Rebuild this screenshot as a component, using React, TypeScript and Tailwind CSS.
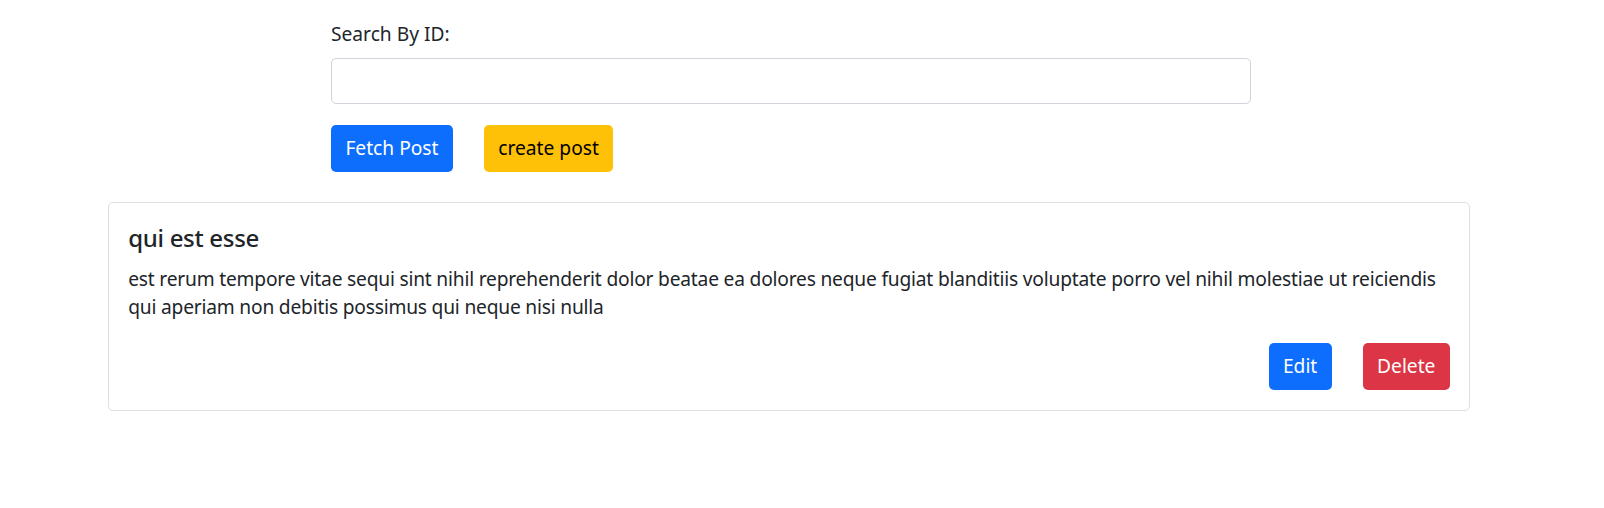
import React from 'react';

const post = {
  title: 'qui est esse',
  body: 'est rerum tempore vitae sequi sint nihil reprehenderit dolor beatae ea dolores neque fugiat blanditiis voluptate porro vel nihil molestiae ut reiciendis qui aperiam non debitis possimus qui neque nisi nulla',
};

export default function App() {
  return (
    <div
      className="min-h-[508px] bg-white text-[#212529] text-[19.2px] leading-[1.5]"
      style={{ fontFamily: '"Segoe UI", "Noto Sans", "Open Sans", sans-serif' }}
    >
      <div className="ml-[108px] w-[1362px] pt-[20px]">
        {/* Search form */}
        <div className="ml-[223px] w-[920px]">
          <label className="block mb-[9.6px]">Search By ID:</label>
          <input
            type="text"
            className="block w-full h-[46px] px-[14.4px] border border-[#ced4da] rounded-[5px] outline-none"
          />
          <div className="flex gap-[31px] mt-[21px]">
            <button className="h-[47px] px-[14.4px] rounded-[5px] bg-[#0d6efd] text-white">Fetch Post</button>
            <button className="h-[47px] px-[14.4px] rounded-[5px] bg-[#ffc107] text-black">create post</button>
          </div>
        </div>

        {/* Post card */}
        <div className="mt-[30px] border border-[#dfdfdf] rounded-[5px] px-[19.2px] pt-[21px] pb-[20px]">
          <h5 className="text-[24px] font-medium leading-[1.2] tracking-[-0.3px] mb-[11.5px]">{post.title}</h5>
          <p className="tracking-[-0.2px] mb-[21px]">{post.body}</p>
          <div className="flex justify-end gap-[31px]">
            <button className="h-[47px] px-[14.4px] rounded-[5px] bg-[#0d6efd] text-white">Edit</button>
            <button className="h-[47px] px-[14.4px] rounded-[5px] bg-[#dc3545] text-white">Delete</button>
          </div>
        </div>
      </div>
    </div>
  );
}
